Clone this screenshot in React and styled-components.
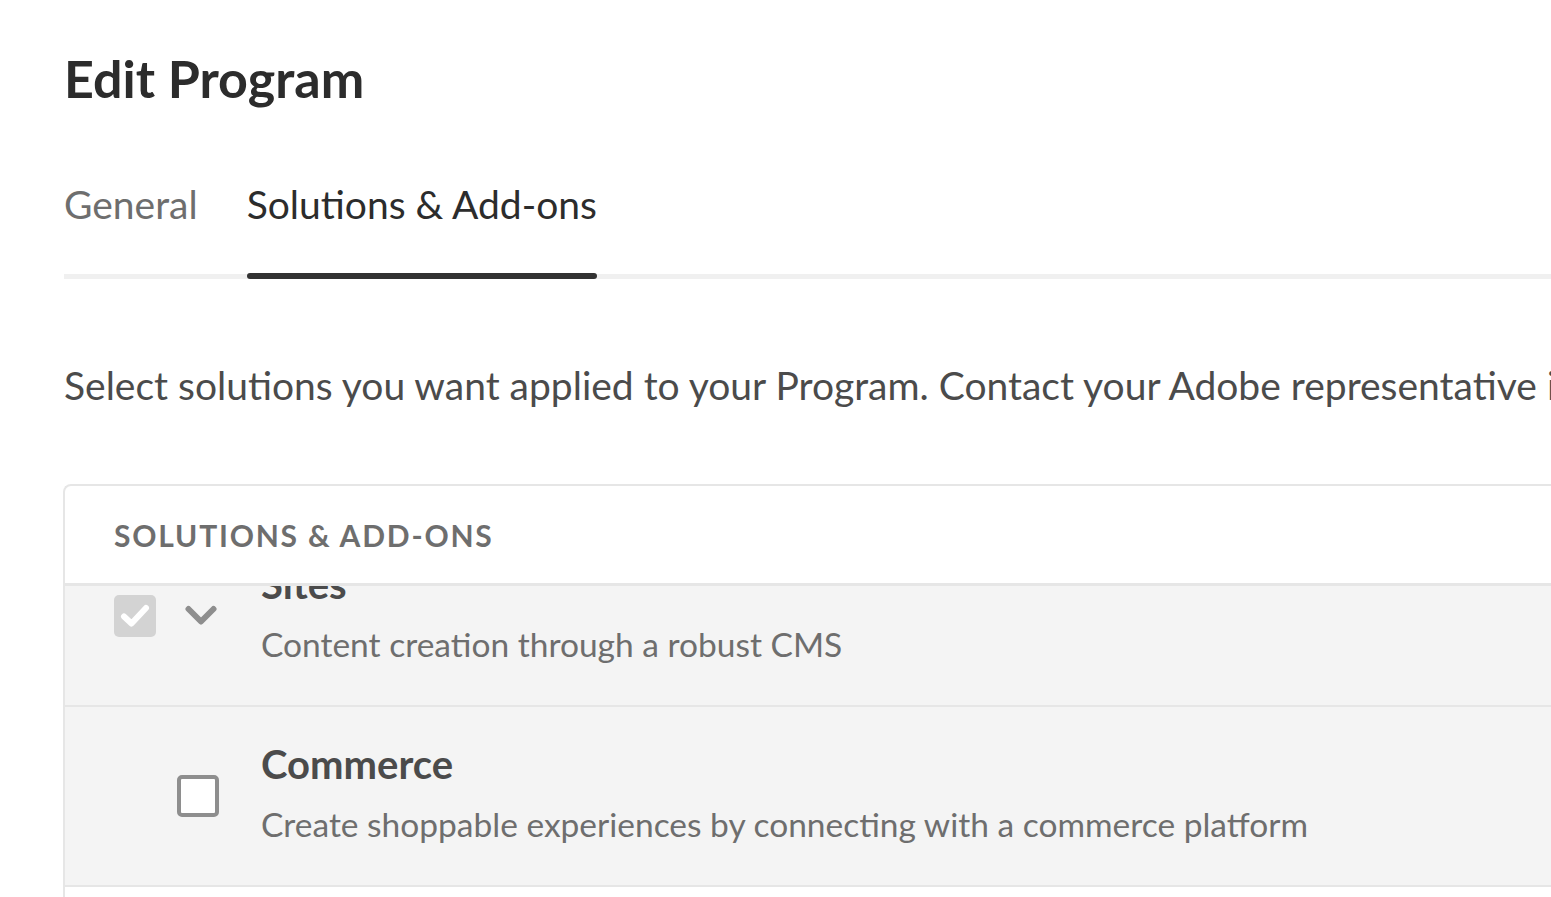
import React, { useLayoutEffect, useRef } from 'react';
import styled, { createGlobalStyle } from 'styled-components';

const GlobalStyle = createGlobalStyle`
  html, body {
    margin: 0;
    padding: 0;
    background: #ffffff;
    overflow: hidden;
  }
  body {
    font-family: Lato, 'Open Sans', sans-serif;
    color: #2c2c2c;
  }
`;

const Page = styled.div`
  width: 1800px;
  padding: 44px 0 0 64px;
  box-sizing: border-box;
`;

const Title = styled.h1`
  margin: 0;
  font-size: 52px;
  line-height: 68px;
  font-weight: 700;
  color: #2c2c2c;
`;

const TabList = styled.div`
  display: flex;
  gap: 49px;
  margin-top: 64px;
  border-bottom: 5px solid #f0f0f0;
`;

const Tab = styled.div`
  position: relative;
  font-size: 39px;
  line-height: 56px;
  padding-bottom: 42px;
  color: ${({ $active }) => ($active ? '#2c2c2c' : '#6e6e6e')};

  &::after {
    content: '';
    display: ${({ $active }) => ($active ? 'block' : 'none')};
    position: absolute;
    left: 0;
    right: 0;
    bottom: -5px;
    height: 6px;
    border-radius: 3px;
    background: #323232;
  }
`;

const Intro = styled.p`
  margin: 80px 0 0;
  font-size: 39px;
  line-height: 52px;
  color: #4b4b4b;
  white-space: nowrap;
`;

const Card = styled.div`
  margin-top: 73px;
  margin-left: -1px;
  border: 2px solid #e6e6e6;
  border-right: none;
  border-bottom: none;
  border-radius: 8px 0 0 0;
  background: #ffffff;
`;

const CardHeader = styled.div`
  height: 97px;
  display: flex;
  align-items: center;
  padding-left: 49px;
  font-size: 30px;
  font-weight: 700;
  letter-spacing: 1.8px;
  text-transform: uppercase;
  color: #6e6e6e;
  border-bottom: 3px solid #e6e6e6;
`;

const List = styled.div`
  height: 330px;
  overflow: hidden;
`;

const ListBody = styled.div`
  padding-bottom: 60px;
`;

const Row = styled.div`
  display: flex;
  align-items: center;
  height: 178px;
  padding-left: ${({ $child }) => ($child ? '112px' : '49px')};
  background: #f4f4f4;
  border-bottom: 2px solid #e6e6e6;
`;

const Checkbox = styled.span`
  flex: none;
  display: flex;
  align-items: center;
  justify-content: center;
  width: 42px;
  height: 42px;
  box-sizing: border-box;
  border-radius: 5px;
  background: ${({ $checked }) => ($checked ? '#d3d3d3' : '#ffffff')};
  border: ${({ $checked }) => ($checked ? 'none' : '4px solid #8e8e8e')};
`;

const Chevron = styled.span`
  flex: none;
  display: flex;
  width: 32px;
  margin-left: 29px;
`;

const RowText = styled.div`
  margin-left: ${({ $child }) => ($child ? '42px' : '44px')};
  display: flex;
  flex-direction: column;
`;

const RowTitle = styled.div`
  font-size: 40px;
  line-height: 48px;
  margin-bottom: 8px;
  font-weight: 700;
  color: #4b4b4b;
`;

const RowDescription = styled.div`
  font-size: 33.5px;
  line-height: 56px;
  color: #6e6e6e;
`;

const solutions = [
  { name: 'Sites', description: 'Content creation through a robust CMS', checked: true, expandable: true },
  {
    name: 'Commerce',
    description: 'Create shoppable experiences by connecting with a commerce platform',
    child: true,
  },
];

const CheckIcon = () => (
  <svg width="30" height="26" viewBox="0 0 30 26">
    <path d="M4 13.5 L11.5 20.5 L26 5" fill="none" stroke="#ffffff" strokeWidth="6" strokeLinecap="round" strokeLinejoin="round" />
  </svg>
);

const ChevronIcon = () => (
  <svg width="32" height="22" viewBox="0 0 32 22">
    <path d="M3.5 4 L16 16.5 L28.5 4" fill="none" stroke="#8e8e8e" strokeWidth="6" strokeLinecap="round" strokeLinejoin="round" />
  </svg>
);

const App = () => {
  const listRef = useRef(null);

  useLayoutEffect(() => {
    if (listRef.current) listRef.current.scrollTop = 59;
  }, []);

  return (
    <Page>
      <GlobalStyle />
      <Title>Edit Program</Title>
      <TabList>
        <Tab>General</Tab>
        <Tab $active>Solutions &amp; Add-ons</Tab>
      </TabList>
      <Intro>
        Select solutions you want applied to your Program. Contact your Adobe representative if you need additional solutions.
      </Intro>
      <Card>
        <CardHeader>Solutions &amp; Add-ons</CardHeader>
        <List ref={listRef}>
          <ListBody>
            {solutions.map((item) => (
              <Row key={item.name} $child={item.child}>
                <Checkbox $checked={item.checked}>{item.checked && <CheckIcon />}</Checkbox>
                {item.expandable && (
                  <Chevron>
                    <ChevronIcon />
                  </Chevron>
                )}
                <RowText $child={item.child}>
                  <RowTitle>{item.name}</RowTitle>
                  <RowDescription>{item.description}</RowDescription>
                </RowText>
              </Row>
            ))}
          </ListBody>
        </List>
      </Card>
    </Page>
  );
};

export default App;
